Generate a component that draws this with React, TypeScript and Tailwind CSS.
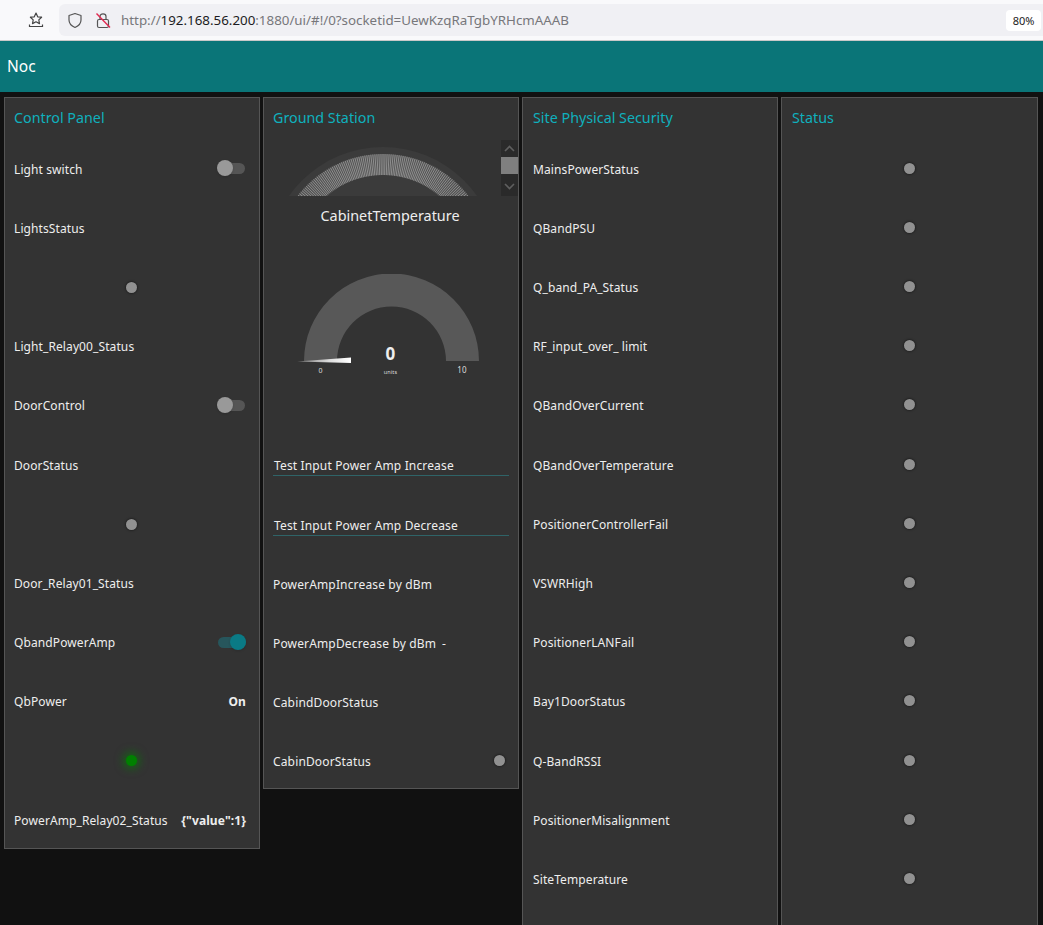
import React from "react";

const font = { fontFamily: '"Noto Sans", sans-serif' };

function Toggle({ on }: { on?: boolean }) {
  return (
    <div className="relative w-[29px] h-[16px] -mt-[2px]">
      <div className={on ? "absolute left-[1px] right-0 top-[3px] h-[11px] rounded-full bg-[#27565c]" : "absolute left-[8px] right-[1px] top-[3px] h-[11px] rounded-full bg-[#555555]"} />
      <div className={on ? "absolute right-0 top-0 w-[16px] h-[16px] rounded-full bg-[#0a7a85] shadow" : "absolute left-0 top-0 w-[16px] h-[16px] rounded-full bg-[#999999] shadow"} />
    </div>
  );
}

function Led({ on }: { on?: boolean }) {
  return on ? (
    <div className="w-[11px] h-[11px] rounded-full bg-[#008000] shadow-[0_0_8px_3px_rgba(0,128,0,0.6)]" />
  ) : (
    <div className="w-[11px] h-[11px] rounded-full bg-[#919191] shadow-[0_0_2px_1px_rgba(0,0,0,0.35)]" />
  );
}

function Row({ label, right, center }: { label?: string; right?: React.ReactNode; center?: React.ReactNode }) {
  return (
    <div className={"h-[59.2px] flex items-center shrink-0 " + (center ? "justify-center" : "justify-between")}>
      {label && <span className="pt-[1px]">{label}</span>}
      {right}
      {center}
    </div>
  );
}

function Panel({ title, className, children }: { title: string; className: string; children: React.ReactNode }) {
  return (
    <section className={"shrink-0 bg-[#333333] border border-[#555555] overflow-hidden " + className}>
      <h2 className="h-[41.6px] pr-[9px] pt-[9px] text-[14.3px] leading-[21px] text-[#0fb0bd] font-normal">{title}</h2>
      <div className="pr-[13px] text-[12px] tracking-[0.1px] text-[#eeeeee]">{children}</div>
    </section>
  );
}

function Ticks() {
  const lines = [];
  for (let i = -50; i <= 50; i++) {
    const r = (i * 1.08 * Math.PI) / 180;
    lines.push(
      <line
        key={i}
        x1={102 + 87 * Math.sin(r)}
        y1={122 - 87 * Math.cos(r)}
        x2={102 + 108 * Math.sin(r)}
        y2={122 - 108 * Math.cos(r)}
        stroke="#8f8f8f"
        strokeWidth="1"
      />
    );
  }
  return <>{lines}</>;
}

function TopGauge() {
  return (
    <div className="relative h-[56px] -mr-[13px]">
      <svg width="204" height="56" viewBox="0 0 204 56" className="absolute left-[8px] top-0">
        <circle cx="102" cy="122" r="115" fill="#3b3b3b" />
        <path d="M-6 122 A108 108 0 0 1 210 122 L189 122 A87 87 0 0 0 15 122 Z" fill="#525252" />
        <Ticks />
      </svg>
      <div className="absolute right-0 top-0 w-[17px] h-[56px] flex flex-col bg-[#2a2a2a]">
        <div className="h-[17px] flex items-center justify-center">
          <svg width="11" height="7" viewBox="0 0 11 7"><path d="M1 6 L5.5 1.5 L10 6" stroke="#5f5f5f" strokeWidth="1.6" fill="none" /></svg>
        </div>
        <div className="h-[17px] bg-[#7f7f7f]" />
        <div className="h-[4px]" />
        <div className="h-[18px] flex items-center justify-center">
          <svg width="11" height="7" viewBox="0 0 11 7"><path d="M1 1 L5.5 5.5 L10 1" stroke="#5f5f5f" strokeWidth="1.6" fill="none" /></svg>
        </div>
      </div>
    </div>
  );
}

function MainGauge() {
  return (
    <svg width="200" height="103" viewBox="0 0 200 103" className="block ml-[21px]">
      <defs>
        <linearGradient id="needle" x1="0" y1="0" x2="1" y2="0">
          <stop offset="0" stopColor="#777777" />
          <stop offset="0.6" stopColor="#dddddd" />
          <stop offset="1" stopColor="#ffffff" />
        </linearGradient>
      </defs>
      <path d="M10 87 A87.5 87.5 0 0 1 185 87 L152 87 A54.5 54.5 0 0 0 43 87 Z" fill="#585858" />
      <polygon points="3,87.5 57,83.5 57,89" fill="url(#needle)" />
      <text x="96.5" y="86" textAnchor="middle" fontSize="17" fontWeight="700" fill="#eeeeee">0</text>
      <text x="96.5" y="100" textAnchor="middle" fontSize="5.5" fill="#dddddd">units</text>
      <text x="26.5" y="99" textAnchor="middle" fontSize="7" fill="#dddddd">0</text>
      <text x="168" y="98.5" textAnchor="middle" fontSize="8" fill="#dddddd">10</text>
    </svg>
  );
}

const physical = ["MainsPowerStatus", "QBandPSU", "Q_band_PA_Status", "RF_input_over_ limit", "QBandOverCurrent", "QBandOverTemperature", "PositionerControllerFail", "VSWRHigh", "PositionerLANFail", "Bay1DoorStatus", "Q-BandRSSI", "PositionerMisalignment", "SiteTemperature"];

export default function App() {
  return (
    <div className="w-[1043px] h-[925px] overflow-hidden bg-[#111111] flex flex-col" style={font}>
      <div className="h-[41px] shrink-0 bg-[#f9f9fb] border-b border-[#c9c9c9] flex items-center">
        <div className="w-[59px] shrink-0 flex justify-center pl-[13px]">
          <svg width="16" height="16" viewBox="0 0 16 16" fill="none" stroke="#444444" strokeWidth="1.2">
            <path d="M8 1 L9.7 4.8 L13.6 5.2 L10.8 7.9 L11.5 11.6 L8 9.8 L4.5 11.6 L5.2 7.9 L2.4 5.2 L6.3 4.8 Z" strokeLinejoin="round" />
            <path d="M1.5 12.5 V14.5 H14.5 V12.5" />
          </svg>
        </div>
        <div className="flex-1 h-[32px] bg-[#f0f0f4] rounded-l-[6px] flex items-center text-[13.35px] leading-none">
          <svg width="16" height="17" viewBox="0 0 16 17" fill="none" stroke="#555555" strokeWidth="1.2" className="ml-[8px]">
            <path d="M8 1.5 L14 3.5 V8 C14 11.5 11.5 14 8 15.5 C4.5 14 2 11.5 2 8 V3.5 Z" strokeLinejoin="round" />
          </svg>
          <svg width="16" height="17" viewBox="0 0 16 17" fill="none" strokeWidth="1.2" className="ml-[12px]">
            <rect x="2.5" y="7.5" width="11" height="8" rx="1.5" stroke="#555555" />
            <path d="M5 7.5 V4.5 C5 1 11 1 11 4.5 V7.5" stroke="#555555" />
            <path d="M1.5 1.5 L15 15.5" stroke="#e22850" strokeWidth="1.4" />
          </svg>
          <span className="ml-[10px] pt-[1px] whitespace-nowrap text-[#77777b]">http://<span className="text-[#1c1b22]">192.168.56.200</span>:1880/ui/#!/0?socketid=UewKzqRaTgbYRHcmAAAB</span>
          <span className="ml-auto mr-[2px] w-[35px] h-[21px] rounded-[4px] bg-white text-[11px] text-[#1c1b22] flex items-center justify-center">80%</span>
        </div>
      </div>
      <header className="h-[51px] shrink-0 bg-[#0a7578] flex items-center pl-[7px] text-[15.5px] text-white">Noc</header>
      <main className="flex-1 flex items-start gap-[3px] pl-[4px] pt-[5px] min-h-0">
        <Panel title="Control Panel" className="w-[256px] h-[752px] pl-[9px]">
          <Row label="Light switch" right={<Toggle />} />
          <Row label="LightsStatus" />
          <Row center={<div className="pl-[2px]"><Led /></div>} />
          <Row label="Light_Relay00_Status" />
          <Row label="DoorControl" right={<Toggle />} />
          <Row label="DoorStatus" />
          <Row center={<div className="pl-[2px]"><Led /></div>} />
          <Row label="Door_Relay01_Status" />
          <Row label="QbandPowerAmp" right={<Toggle on />} />
          <Row label="QbPower" right={<b className="font-bold pt-[1px]">On</b>} />
          <Row center={<div className="pl-[2px] -mt-[2px]"><Led on /></div>} />
          <Row label="PowerAmp_Relay02_Status" right={<b className="font-bold pt-[1px]">{'{"value":1}'}</b>} />
        </Panel>
        <Panel title="Ground Station" className="w-[256px] h-[692px] pl-[9px]">
          <TopGauge />
          <div className="h-[39px] pt-[2px] flex items-center justify-center text-[14.4px] tracking-normal pl-[2px]">CabinetTemperature</div>
          <div className="h-[39px]" />
          <MainGauge />
          <div className="h-[79px]" />
          <div className="tracking-[0.15px]">
            {["Test Input Power Amp Increase", "Test Input Power Amp Decrease"].map((t) => (
              <div key={t} className="h-[60px] -mr-[4px]">
                <div className="pl-[1px] h-[20px] flex items-end border-b border-[#2f6468] leading-[18px]">{t}</div>
              </div>
            ))}
            <div className="-mt-[21px]" />
            <Row label="PowerAmpIncrease by dBm" />
            <div className="h-[59.2px] flex items-center gap-[6px]"><span className="pt-[1px]">PowerAmpDecrease by dBm</span><span className="pt-[1px]">-</span></div>
            <Row label="CabindDoorStatus" />
            <div className="h-[59.2px] flex items-center justify-between"><span className="pt-[1px]">CabinDoorStatus</span><div className="-mt-[2px]"><Led /></div></div>
          </div>
        </Panel>
        <Panel title="Site Physical Security" className="w-[256px] h-[840px] pl-[10px]">
          {physical.map((p) => <Row key={p} label={p} />)}
        </Panel>
        <Panel title="Status" className="w-[257px] h-[840px] pl-[10px]">
          {physical.map((p) => <Row key={p} center={<div className="pl-[2px] -mt-[2px]"><Led /></div>} />)}
        </Panel>
      </main>
    </div>
  );
}
